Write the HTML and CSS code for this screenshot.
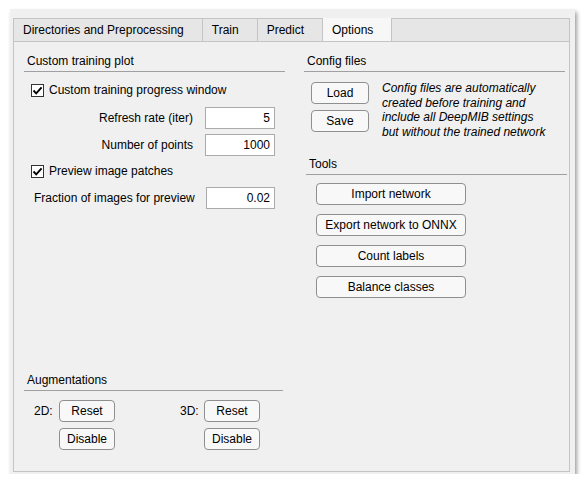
FILE: index.html
```html
<!DOCTYPE html>
<html>
<head>
<meta charset="utf-8">
<link rel="stylesheet" href="styles.css">
</head>
<body>
<div class="window">
  <div class="tabgroup">
    <div class="tabs">
      <div class="tab">Directories and Preprocessing</div>
      <div class="tab">Train</div>
      <div class="tab">Predict</div>
      <div class="tab selected">Options</div>
    </div>
    <div class="content">
      <div class="col left">
        <div class="heading">Custom training plot</div>
        <div class="check-row first">
          <span class="checkbox"><svg width="11" height="11" viewBox="0 0 11 11"><path d="M1.5 5.5 L4.2 8.3 L9.6 2.3" fill="none" stroke="#000" stroke-width="1.9"/></svg></span>
          <span>Custom training progress window</span>
        </div>
        <div class="field-row r1">
          <label class="lbl right">Refresh rate (iter)</label>
          <input class="num" type="text" value="5">
        </div>
        <div class="field-row r2">
          <label class="lbl right">Number of points</label>
          <input class="num" type="text" value="1000">
        </div>
        <div class="check-row second">
          <span class="checkbox"><svg width="11" height="11" viewBox="0 0 11 11"><path d="M1.5 5.5 L4.2 8.3 L9.6 2.3" fill="none" stroke="#000" stroke-width="1.9"/></svg></span>
          <span>Preview image patches</span>
        </div>
        <div class="field-row r3">
          <label class="lbl leftlbl">Fraction of images for preview</label>
          <input class="num num-b" type="text" value="0.02">
        </div>
        <div class="aug">
          <div class="heading">Augmentations</div>
          <div class="aug-grid">
            <span class="dim">2D:</span>
            <button class="btn">Reset</button>
            <span></span>
            <span class="dim">3D:</span>
            <button class="btn">Reset</button>
            <span></span>
            <button class="btn">Disable</button>
            <span></span>
            <span></span>
            <button class="btn">Disable</button>
          </div>
        </div>
      </div>
      <div class="col right">
        <div class="config">
          <div class="heading">Config files</div>
          <div class="config-body">
            <div class="config-btns">
              <button class="btn small">Load</button>
              <button class="btn small">Save</button>
            </div>
            <p class="note">Config files are automatically created before training and include all DeepMIB settings but without the trained network</p>
          </div>
        </div>
        <div class="tools">
          <div class="heading">Tools</div>
          <div class="tool-btns">
            <button class="btn wide">Import network</button>
            <button class="btn wide">Export network to ONNX</button>
            <button class="btn wide">Count labels</button>
            <button class="btn wide">Balance classes</button>
          </div>
        </div>
      </div>
    </div>
  </div>
</div>
</body>
</html>
```
FILE: styles.css
```css
* { box-sizing: border-box; }
html, body { margin: 0; padding: 0; background: #ffffff; }
body {
  font-family: "Liberation Sans", Arial, sans-serif;
  font-size: 12px;
  color: #000;
}
.window {
  margin: 9px 0 0 10px;
  width: 565px;
  height: 465px;
  background: #f0f0f0;
  box-shadow: 2px 3px 4px rgba(0,0,0,0.38);
  padding: 9px 0 0 3px;
}
.tabgroup {
  width: 557px;
  height: 454px;
  border: 1px solid #c4c4c4;
  display: flex;
  flex-direction: column;
}
.tabs {
  display: flex;
  height: 23px;
  background: #e6e6e6;
  border-bottom: 1px solid #c4c4c4;
}
.tab {
  height: 22px;
  line-height: 22px;
  padding: 0 18px 0 9px;
  border-right: 1px solid #c4c4c4;
  white-space: nowrap;
}
.tab.selected {
  background: #f7f7f7;
  height: 23px;
  margin-top: -1px;
  line-height: 24px;
}
.content {
  flex: 1;
  display: grid;
  grid-template-columns: 261px 263px;
  column-gap: 19px;
  padding: 10px 2px 21px 10px;
}
.col { display: flex; flex-direction: column; }
.heading {
  height: 20px;
  line-height: 19px;
  padding-left: 3px;
  border-bottom: 1px solid #a0a0a0;
}
.check-row {
  display: flex;
  align-items: center;
  height: 13px;
  padding-left: 7px;
  gap: 5px;
  line-height: 13px;
}
.check-row.first { margin-top: 12px; }
.check-row.second { margin-top: 9px; }
.checkbox {
  width: 13px;
  height: 13px;
  border: 1px solid #333;
  background: #fff;
  display: flex;
  align-items: center;
  justify-content: center;
}
.field-row {
  display: flex;
  align-items: center;
  height: 22px;
  padding-right: 10px;
}
.field-row.r1 { margin-top: 10px; }
.field-row.r2 { margin-top: 5px; }
.field-row.r3 { margin-top: 9px; }
.lbl { flex: 1; white-space: nowrap; }
.lbl.right { text-align: right; padding-right: 12px; }
.lbl.leftlbl { padding-left: 10px; }
.num {
  width: 70px;
  height: 22px;
  border: 1px solid #ababab;
  background: #fff;
  font: inherit;
  color: #000;
  text-align: right;
  padding: 0 4px 0 2px;
  margin: 0;
  outline: none;
}
.num-b { width: 69px; }
.aug { margin-top: auto; }
.aug .heading { margin-right: 2px; }
.aug-grid {
  display: grid;
  grid-template-columns: 25px 56px 65px 24px 56px;
  row-gap: 6px;
  margin-top: 9px;
  padding-left: 10px;
  align-items: center;
}
.btn {
  height: 22px;
  border: 1px solid #8f8f8f;
  border-radius: 4px;
  background: #f8f8f8;
  font: inherit;
  color: #000;
  padding: 0;
  margin: 0;
}
.aug-grid .btn { width: 56px; }
.config { margin-right: 2px; }
.config-body {
  display: flex;
  padding-left: 7px;
}
.config-btns {
  display: flex;
  flex-direction: column;
  gap: 6px;
  margin-top: 10px;
}
.btn.small { width: 58px; }
.note {
  margin: 9px 0 0 13px;
  font-style: italic;
  line-height: 14.5px;
  width: 170px;
}
.tools { margin-left: 2px; margin-top: 16px; }
.tool-btns {
  display: flex;
  flex-direction: column;
  gap: 9px;
  margin-top: 8px;
  padding-left: 10px;
}
.btn.wide { width: 150px; }
```
